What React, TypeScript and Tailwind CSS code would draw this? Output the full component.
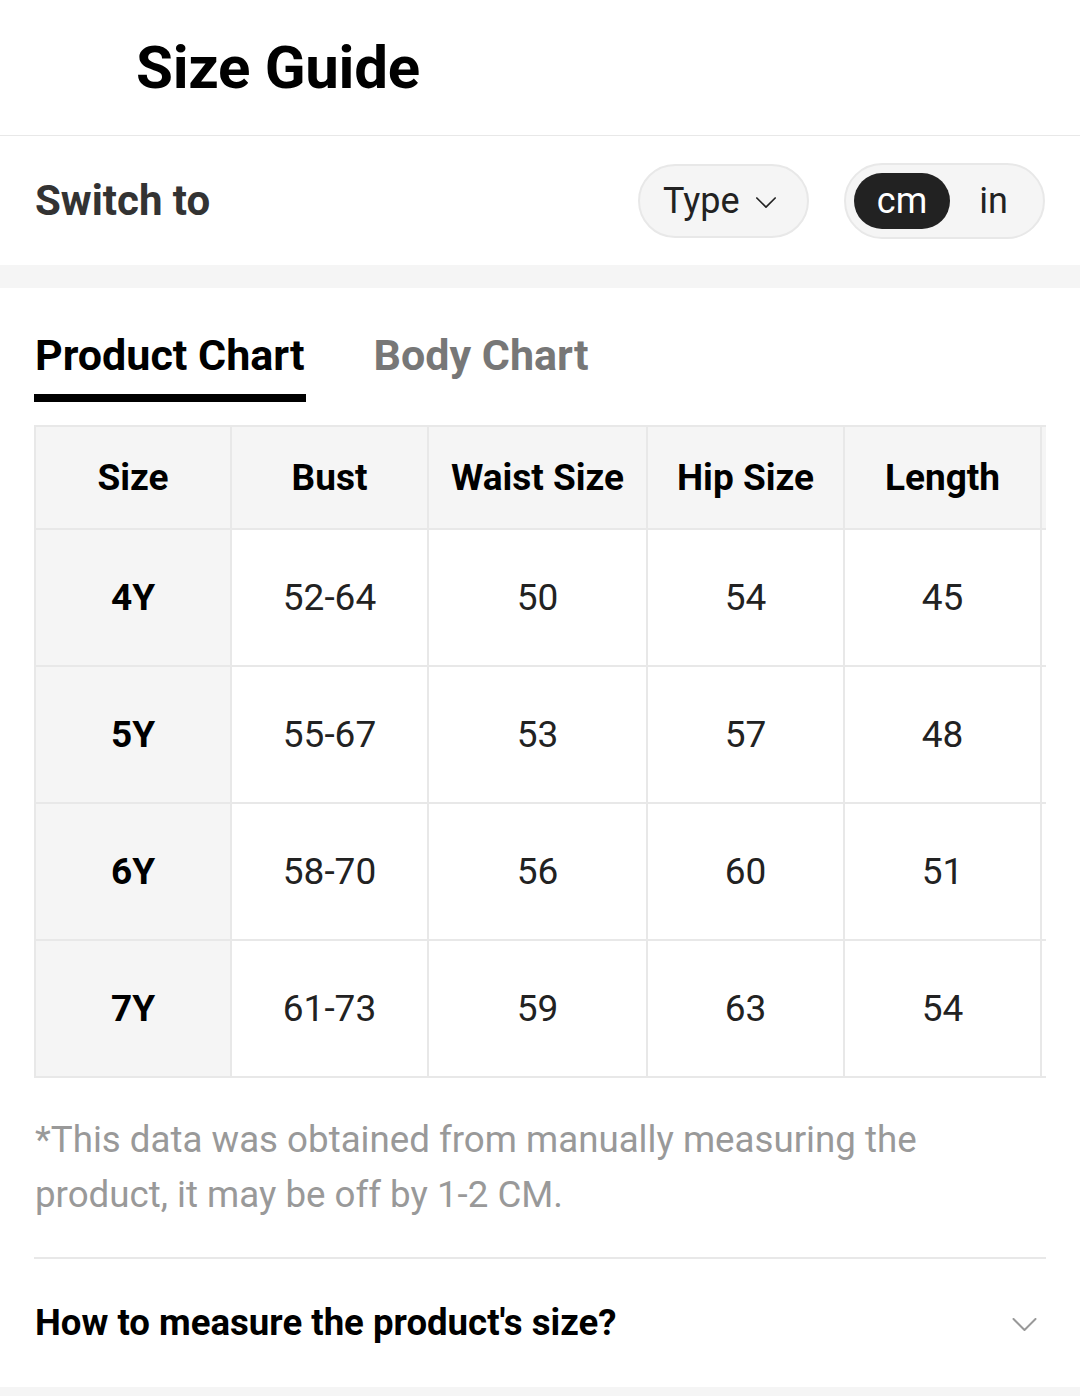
import React from "react";

const cols = [
  { w: "w-[196px]", key: "Size" },
  { w: "w-[197px]", key: "Bust" },
  { w: "w-[219px]", key: "Waist Size" },
  { w: "w-[197px]", key: "Hip Size" },
  { w: "w-[197px]", key: "Length" },
  { w: "w-[197px]", key: "" },
];

const rows = [
  ["4Y", "52-64", "50", "54", "45", ""],
  ["5Y", "55-67", "53", "57", "48", ""],
  ["6Y", "58-70", "56", "60", "51", ""],
  ["7Y", "61-73", "59", "63", "54", ""],
];

function Chevron({ className }: { className?: string }) {
  return (
    <svg viewBox="0 0 24 14" className={className} fill="none" stroke="currentColor" strokeWidth={2} strokeLinecap="round" strokeLinejoin="round">
      <path d="M1 1 L12 12 L23 1" />
    </svg>
  );
}

export default function App() {
  return (
    <div className="w-[1080px] min-h-[1397px] bg-white font-['Roboto',sans-serif] text-black">
      {/* Header */}
      <div className="h-[136px] border-b border-[#e8e8e8] flex items-center pl-[136px]">
        <h1 className="text-[60px] font-bold leading-none tracking-[-0.3px] text-black">Size Guide</h1>
      </div>

      {/* Switch row */}
      <div className="h-[129px] flex items-center justify-between px-[35px]">
        <div className="text-[42px] font-bold text-[#333]">Switch to</div>
        <div className="flex items-center gap-[35px]">
          <div className="h-[74px] w-[171px] rounded-full border-2 border-[#e8e8e8] bg-[#f5f5f5] flex items-center pl-[23px] gap-[16px]">
            <span className="text-[36px] text-[#222] leading-none">Type</span>
            <Chevron className="w-[20px] h-[12px] text-[#222] mt-[4px]" />
          </div>
          <div className="h-[76px] w-[201px] rounded-full border-2 border-[#e8e8e8] bg-[#f5f5f5] flex items-center pl-[8px]">
            <div className="h-[56px] w-[96px] rounded-full bg-[#222] flex items-center justify-center text-white text-[36px] leading-none">cm</div>
            <div className="flex-1 flex items-center justify-center text-[36px] text-[#222] leading-none pr-[6px]">in</div>
          </div>
        </div>
      </div>

      <div className="h-[23px] bg-[#f5f5f5]" />

      {/* Tabs */}
      <div className="px-[35px] pt-[43px] flex gap-[69px]">
        <div className="flex flex-col">
          <div className="text-[43px] font-bold leading-[48px] text-black">Product Chart</div>
          <div className="mt-[15px] h-[8px] bg-black -ml-[1px] w-[calc(100%+2px)]" />
        </div>
        <div className="text-[43px] font-bold leading-[48px] text-[#777]">Body Chart</div>
      </div>

      {/* Table */}
      <div className="mt-[23px] mx-[34px] overflow-hidden">
        <div className="w-max border-l-2 border-t-2 border-[#e8e8e8]">
          <div className="flex bg-[#f5f5f5]">
            {cols.map((c, i) => (
              <div key={i} className={`${c.w} h-[103px] border-r-2 border-b-2 border-[#e8e8e8] flex items-center justify-center text-[37px] font-bold text-black`}>
                {c.key}
              </div>
            ))}
          </div>
          {rows.map((r) => (
            <div key={r[0]} className="flex">
              {r.map((v, i) => (
                <div
                  key={i}
                  className={`${cols[i].w} h-[137px] border-r-2 border-b-2 border-[#e8e8e8] flex items-center justify-center text-[37px] ${i === 0 ? "bg-[#f5f5f5] font-bold text-black" : "bg-white text-[#222]"}`}
                >
                  {v}
                </div>
              ))}
            </div>
          ))}
        </div>
      </div>

      {/* Note */}
      <div className="px-[35px] mt-[34px] text-[36.7px] leading-[55px] text-[#999]">
        *This data was obtained from manually measuring the
        <br />
        product, it may be off by 1-2 CM.
      </div>

      <div className="mx-[34px] mt-[35px] h-[2px] bg-[#e8e8e8]" />

      <div className="h-[128px] px-[35px] flex items-center justify-between">
        <div className="text-[36.6px] font-bold text-black">How to measure the product's size?</div>
        <Chevron className="w-[25px] h-[14px] text-[#999] mr-[8px] mt-[4px]" />
      </div>

      <div className="h-[9px] bg-[#f5f5f5]" />
    </div>
  );
}
